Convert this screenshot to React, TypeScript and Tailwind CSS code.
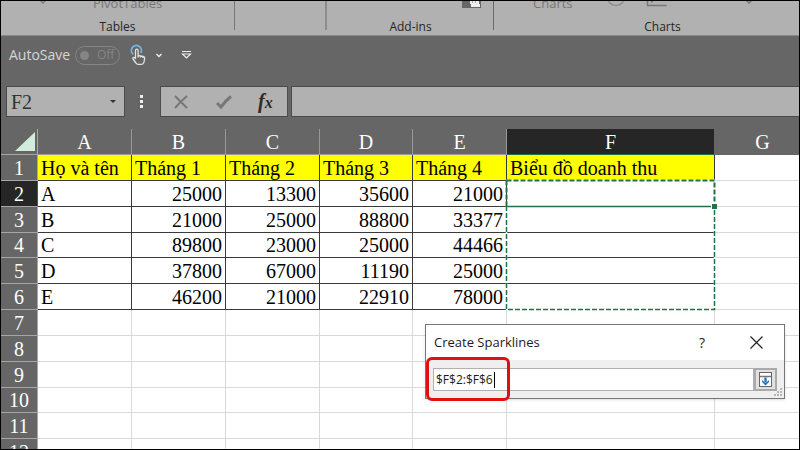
import React from "react";

const UI = "font-['Open_Sans','Noto_Sans',sans-serif]";
const SERIF = "font-['Liberation_Serif',serif]";

const columns = [
  { name: "A", width: "w-[94px]" },
  { name: "B", width: "w-[94px]" },
  { name: "C", width: "w-[94px]" },
  { name: "D", width: "w-[93px]" },
  { name: "E", width: "w-[94px]" },
  { name: "F", width: "w-[208px]" },
  { name: "G", width: "" },
];

const rows: { height: string; cells: string[] }[] = [
  { height: "h-[26px]", cells: ["Họ và tên", "Tháng 1", "Tháng 2", "Tháng 3", "Tháng 4", "Biểu đồ doanh thu"] },
  { height: "h-[26px]", cells: ["A", "25000", "13300", "35600", "21000", ""] },
  { height: "h-[26px]", cells: ["B", "21000", "25000", "88800", "33377", ""] },
  { height: "h-[25px]", cells: ["C", "89800", "23000", "25000", "44466", ""] },
  { height: "h-[26px]", cells: ["D", "37800", "67000", "11190", "25000", ""] },
  { height: "h-[26px]", cells: ["E", "46200", "21000", "22910", "78000", ""] },
  { height: "h-[26px]", cells: [] },
  { height: "h-[26px]", cells: [] },
  { height: "h-[26px]", cells: [] },
  { height: "h-[25px]", cells: [] },
  { height: "h-[26px]", cells: [] },
  { height: "h-[26px]", cells: [] },
];

function RibbonGroup({ label, className, children }: { label: string; className: string; children: React.ReactNode }) {
  return (
    <section className={`flex h-[34px] shrink-0 flex-col justify-between ${className}`}>
      <div className="flex h-[10px] items-end overflow-hidden text-[#777]">{children}</div>
      <h2 className="text-center text-xs leading-4 text-[#262626]">{label}</h2>
    </section>
  );
}

function Divider({ className }: { className: string }) {
  return <div className={`h-[29px] shrink-0 ${className}`} />;
}

function Ribbon() {
  return (
    <header className="flex h-[35px] shrink-0 items-start overflow-hidden border-b border-[#8a8a8a] bg-[#b1b1b1]">
      <RibbonGroup label="Tables" className="w-[233px]">
        <svg className="mr-[47px] ml-[39px] h-[10px] w-[6px]" viewBox="0 0 6 10" fill="none" stroke="#777" strokeWidth="1.300">
          <path d="M0 -1l3 3l3 -3" />
        </svg>
        <button type="button" className="h-4 text-[13px] leading-4 whitespace-nowrap">
          PivotTables
        </button>
      </RibbonGroup>
      <Divider className="w-px bg-[#777]" />
      <Divider className="mr-px ml-[90px] w-[2px] bg-[#8c8c8c]" />
      <RibbonGroup label="Add-ins" className="w-[165px]">
        <svg className="ml-[134px] h-[10px] w-[19px]" viewBox="0 0 19 10" aria-hidden="true">
          <rect width="19" height="7" fill="#666" />
          <path d="M8 0h9v3h1v3H9V3H8z" fill="#eee" />
          <path d="M10.500 0v2M13.500 0v2" stroke="#aaa" />
        </svg>
      </RibbonGroup>
      <Divider className="w-px bg-[#6a6a6a]" />
      <RibbonGroup label="Charts" className="min-w-[337px] flex-1">
        <button type="button" className="ml-[39px] h-4 text-[13px] leading-4">
          Charts
        </button>
        <svg className="ml-[34px] h-[10px] w-[160px] shrink-0" viewBox="0 0 160 10" fill="none" aria-hidden="true">
          <circle cx="9" cy="-4" r="8.500" stroke="#8a8a8a" strokeWidth="1.200" />
          <path d="M40.500 0v4.500h19" stroke="#777" strokeWidth="1.500" />
          <path d="M44 1.500l2 -2" stroke="#777" strokeWidth="1.500" />
          <path d="M139 -1l3 3l3 -3" stroke="#777" strokeWidth="1.500" />
        </svg>
      </RibbonGroup>
    </header>
  );
}

function QuickAccess() {
  return (
    <div className="flex h-[50px] shrink-0 items-start bg-[#666] pt-[7px] pl-2 text-[#d6d6d6]">
      <div className="flex h-6 items-center">
        <span id="autosave" className="w-[66px] text-sm">
          AutoSave
        </span>
        <button
          type="button"
          role="switch"
          aria-checked="false"
          aria-labelledby="autosave"
          className="flex h-[19px] w-[45px] items-center gap-2 rounded-full border border-[#858585] pl-1 text-xs text-[#858585]"
        >
          <span className="h-[9px] w-[9px] rounded-full bg-[#858585]" />
          Off
        </button>
        <button type="button" aria-label="Touch mode" className="ml-[10px]">
          <svg className="h-[22px] w-[18px]" viewBox="0 0 18 22" fill="none">
            <path d="M3.200 10.300A5 5 0 1 1 10.800 8.800" stroke="#79b4dc" strokeWidth="1.800" />
            <path
              d="M5.500 14V6.500a1.300 1.300 0 0 1 2.600 0v5l5 1q1.800.4 1.500 2.300l-.7 3.500q-.5 2-2.500 2H8.200q-1.500 0-2.300-1.300L3 15q-.5-1.200.5-1.500 1-.2 2 1zM8.100 11v2.500M10.500 11.500v2M12.800 12v2"
              stroke="#e2e2e2"
              strokeWidth="1.300"
              strokeLinejoin="round"
            />
          </svg>
        </button>
        <button type="button" aria-label="Mode options" className="ml-[7px]">
          <svg className="h-3 w-2" viewBox="0 0 8 12" fill="none" stroke="#eee" strokeWidth="1.400">
            <path d="M1.500 5l2.500 2.500L6.500 5" />
          </svg>
        </button>
        <button type="button" aria-label="Customize toolbar" className="ml-[18px]">
          <svg className="h-3 w-[11px]" viewBox="0 0 11 12" fill="none" stroke="#eee" strokeWidth="1.200">
            <path d="M1 2.500h9M1.500 5h8l-4 4z" />
          </svg>
        </button>
      </div>
    </div>
  );
}

function FormulaBar() {
  return (
    <div className="flex h-[43px] shrink-0 items-start bg-[#666] pl-[5px]">
      <div className="flex h-[31px] w-[119px] items-center border border-[#4b4b4b] bg-[#b1b1b1] pr-2">
        <input
          aria-label="Name box"
          defaultValue="F2"
          className={`min-w-0 flex-1 bg-transparent pl-1 text-xl leading-7 text-[#333] outline-none ${SERIF}`}
        />
        <button type="button" aria-label="Choose a name">
          <svg className="h-[3px] w-[6px]" viewBox="0 0 6 3" fill="#333">
            <path d="M0 0h6L3 3z" />
          </svg>
        </button>
      </div>
      <div className="flex h-[31px] w-[35px] flex-col items-center justify-center gap-[2px] pr-[2px]">
        <i className="h-[3px] w-[3px] bg-[#eee]" />
        <i className="h-[3px] w-[3px] bg-[#eee]" />
        <i className="h-[3px] w-[3px] bg-[#eee]" />
      </div>
      <div className="flex h-[31px] w-32 items-center border border-[#4b4b4b] bg-[#b1b1b1] pl-[13px]">
        <button type="button" aria-label="Cancel">
          <svg className="h-[14px] w-[14px]" viewBox="0 0 14 14" fill="none" stroke="#777" strokeWidth="2">
            <path d="M1 1q5 5 12 12M13 1Q6 7 1 13" />
          </svg>
        </button>
        <button type="button" aria-label="Enter" className="ml-7">
          <svg className="h-[14px] w-4" viewBox="0 0 16 14" fill="none" stroke="#777" strokeWidth="3">
            <path d="M1 8l4 4Q9 6 15 1.500" />
          </svg>
        </button>
        <button
          type="button"
          aria-label="Insert function"
          className={`ml-[26px] text-xl leading-6 font-bold text-[#2b2b2b] italic ${SERIF}`}
        >
          f<span className="text-base">x</span>
        </button>
      </div>
      <input
        aria-label="Formula"
        className="ml-[3px] h-[31px] min-w-0 flex-1 border border-r-0 border-[#4b4b4b] bg-[#b1b1b1] outline-none"
      />
    </div>
  );
}

function Selection() {
  return (
    <svg className="absolute -top-[2px] -left-[2px] z-10 h-[134px] w-[212px]" viewBox="0 0 212 134" fill="none" aria-hidden="true">
      <path d="M2 27.500H207" stroke="#217346" strokeWidth="1.500" />
      <path d="M1.500 1.500H209.500V27" stroke="#fff" strokeWidth="2" />
      <path d="M1.500 1.500H209.500V27M1.500 1.500V27" stroke="#217346" strokeWidth="2" strokeDasharray="5 2" />
      <path d="M1.500 27V130.500H209.500V30" stroke="#fff" strokeWidth="1.500" />
      <path d="M1.500 27V130.500H209.500V30" stroke="#217346" strokeWidth="1.500" strokeDasharray="5 2" />
      <rect x="206" y="24" width="6" height="6" fill="#fff" />
      <rect x="207" y="25" width="5" height="5" fill="#217346" />
    </svg>
  );
}

function cellStyle(row: number, col: number) {
  const filled = row < 6 && col < 6;
  const border = filled ? "border-[#3a3a3a]" : "border-[#d9d9d9]";
  const background = row === 0 && col < 6 ? "bg-[#ffff00]" : "bg-white";
  const align = row > 0 && col > 0 ? "text-right" : "text-left";
  return `${border} ${background} ${align}`;
}

function Sheet() {
  return (
    <table
      className={`w-[calc(100%+12px)] table-fixed border-separate border-spacing-0 text-xl leading-6 text-black ${SERIF}`}
    >
      <thead>
        <tr className="h-[26px] text-white">
          <th className="w-[37px] border-r border-b border-[#a6a6a6] bg-[#666] p-0">
            <svg className="ml-auto h-[20px] w-[22px]" viewBox="0 0 22 20" aria-hidden="true">
              <path d="M20 0v19H0z" fill="#d2ecdc" />
            </svg>
          </th>
          {columns.map((c) => (
            <th
              key={c.name}
              scope="col"
              className={`border-r border-b p-0 pt-px font-normal ${c.width} ${
                c.name === "F"
                  ? "border-r-[#666] border-b-[#217346] bg-[#262626]"
                  : c.name === "G"
                    ? "border-[#666] bg-[#666]"
                    : "border-[#999] bg-[#666]"
              }`}
            >
              {c.name}
            </th>
          ))}
        </tr>
      </thead>
      <tbody>
        {rows.map((r, row) => (
          <tr key={row} className={r.height}>
            <th
              scope="row"
              className={`border-r border-b border-b-[#a6a6a6] p-0 text-center font-normal text-white ${
                row === 1 ? "border-r-[#217346] bg-[#262626]" : "border-r-[#a6a6a6] bg-[#666]"
              }`}
            >
              {row + 1}
            </th>
            {columns.map((c, col) => (
              <td key={c.name} className={`relative border-r border-b px-[3px] py-0 whitespace-nowrap ${cellStyle(row, col)}`}>
                {r.cells[col] ?? ""}
                {row === 1 && col === 5 && <Selection />}
              </td>
            ))}
          </tr>
        ))}
      </tbody>
    </table>
  );
}

function SparklineDialog() {
  return (
    <div
      role="dialog"
      aria-labelledby="dialog-title"
      className="absolute top-[323px] left-[424px] z-20 w-[360px] border border-[#777] bg-[#efefef] shadow-sm"
    >
      <div className="flex h-[35px] items-center bg-white pr-[21px] pl-2 text-[#1c1c1c]">
        <h1 id="dialog-title" className="flex-1 text-[13px]">
          Create Sparklines
        </h1>
        <button type="button" aria-label="Help" className="w-4 text-sm">
          ?
        </button>
        <button type="button" aria-label="Close" className="ml-10">
          <svg className="h-[13px] w-[13px]" viewBox="0 0 13 13" fill="none" stroke="#222" strokeWidth="1.200">
            <path d="M.5.500l12 12M12.500.500l-12 12" />
          </svg>
        </button>
      </div>
      <div className="flex h-[38px] items-start px-[7px] pt-2">
        <div className="flex h-[23px] min-w-0 flex-1 items-center border border-[#b0b0b0] bg-white pl-[2px]">
          <input
            aria-label="Location range"
            defaultValue="$F$2:$F$6"
            size={9}
            className="h-5 w-[58px] bg-transparent text-xs text-[#1c1c1c] outline-none"
          />
          <span className="h-4 w-px bg-black" />
        </div>
        <button
          type="button"
          aria-label="Expand dialog"
          className="flex h-[23px] w-[23px] items-center justify-center border-2 border-[#aaa] bg-[#e1e1e1]"
        >
          <svg className="h-[15px] w-[13px] shrink-0" viewBox="0 0 13 15" fill="none">
            <rect x=".5" y=".5" width="12" height="14" fill="#fff" stroke="#666" />
            <path d="M1 4.500h11" stroke="#777" strokeWidth="1.500" />
            <path d="M6.500 5.500v5" stroke="#2f74b8" strokeWidth="2.400" />
            <path d="M3 8v2l3.500 3.500L10 10V8L6.500 11z" fill="#2f74b8" />
          </svg>
        </button>
      </div>
      <svg className="absolute right-px bottom-px h-[9px] w-[9px]" viewBox="0 0 9 9" fill="#b5b5b5" aria-hidden="true">
        <path d="M6 0h2v2h-2zM6 3h2v2h-2zM6 6h2v2h-2zM3 3h2v2h-2zM3 6h2v2h-2zM0 6h2v2h-2z" />
      </svg>
      <div className="absolute top-8 left-0 h-11 w-[84px] rounded-md border-[3px] border-[#e01010]" />
    </div>
  );
}

export default function App() {
  return (
    <main className={`relative flex h-screen flex-col overflow-hidden border border-black bg-white ${UI}`}>
      <Ribbon />
      <QuickAccess />
      <FormulaBar />
      <Sheet />
      <SparklineDialog />
    </main>
  );
}
